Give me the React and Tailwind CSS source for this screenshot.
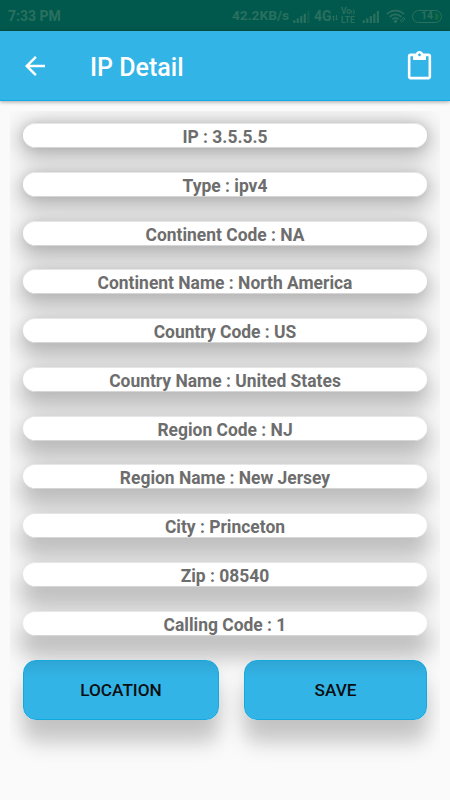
import React from 'react';

const details = [
  { label: 'IP', value: '3.5.5.5' },
  { label: 'Type', value: 'ipv4' },
  { label: 'Continent Code', value: 'NA' },
  { label: 'Continent Name', value: 'North America' },
  { label: 'Country Code', value: 'US' },
  { label: 'Country Name', value: 'United States' },
  { label: 'Region Code', value: 'NJ' },
  { label: 'Region Name', value: 'New Jersey' },
  { label: 'City', value: 'Princeton' },
  { label: 'Zip', value: '08540' },
  { label: 'Calling Code', value: '1' }
];

// Elevation shadow drops further the lower the element sits on the screen
const elevation = (index) => ({
  boxShadow: [
    `0 ${4 + index * 1.1}px 24px 7px rgba(0,0,0,0.16)`,
    `0 ${6 + index * 1.3}px 18px 1px rgba(0,0,0,${0.13 - index * 0.004})`,
    `0 0 10px rgba(0,0,0,${0.1 - index * 0.008})`
  ].join(', ')
});

const SignalIcon = ({ className, dimLast }) => (
  <svg viewBox="0 0 18 14" className={className} fill="currentColor">
    <rect x="0" y="11" width="2.4" height="3" />
    <rect x="3.8" y="9" width="2.4" height="5" />
    <rect x="7.6" y="6.5" width="2.4" height="7.5" />
    <rect x="11.4" y="4" width="2.4" height="10" />
    <rect x="15.2" y="1" width="2.4" height="13" opacity={dimLast ? 0.4 : 1} />
  </svg>
);

const StatusBar = () => (
  <div className="h-[31px] bg-[#01594d] border-b border-[#0b5140] text-[#29705f] flex items-center pt-[2px] pl-2 pr-[8px]">
    <span className="text-[14px] font-bold leading-none">7:33 PM</span>
    <div className="ml-auto flex items-center">
      <span className="text-[13.7px] font-bold leading-none">42.2KB/s</span>
      <SignalIcon className="w-[17px] h-[13px] ml-[4px]" dimLast />
      <span className="w-[17px] text-[14px] font-bold leading-none ml-[4px]">4G</span>
      <svg viewBox="0 0 6 6" className="w-[6px] h-[6px] ml-[1px] mt-1" fill="none" stroke="currentColor">
        <path d="M1.5 6V1M.3 2.2 1.5 1l1.2 1.2M4.5 0v5M3.3 3.8 4.5 5l1.2-1.2" />
      </svg>
      <div className="ml-[3px] w-[15px] flex flex-col text-[8.5px] font-bold leading-[9px]">
        <div className="flex items-center">
          <span>Vo</span>
          <svg viewBox="0 0 4 6" className="w-[4px] h-[6px]" fill="none" stroke="currentColor">
            <path d="M.5 1.500q1 1.500 0 3M2.500.5q2 2.500 0 5" />
          </svg>
        </div>
        <span>LTE</span>
      </div>
      <SignalIcon className="w-[18px] h-[13px] ml-[6px]" />
      <svg viewBox="0 0 20 14" className="w-[20px] h-[14px] ml-[6px]" fill="none" stroke="currentColor" strokeWidth="1.8">
        <path d="M1 5.2a12 12 0 0 1 17 0M3.7 7.8a8.2 8.2 0 0 1 11.6 0M6.3 10.3a4.5 4.5 0 0 1 6.4 0" />
        <circle cx="9.5" cy="12.3" r=".8" />
        <path d="m14.5 11.5 3-3 1.5 1.5-3.5 3z" strokeWidth="1" />
      </svg>
      <div className="ml-[6px] w-[30px] h-[13px] rounded-full border border-current flex items-center justify-end pr-[2px]">
        <span className="text-[10.5px] font-bold leading-none mr-[2px]">14</span>
        <span className="w-[4px] h-[7px] rounded-r-full bg-[#0c6b40]" />
      </div>
    </div>
  </div>
);

const AppBar = () => (
  <header className="relative z-10 h-[70px] bg-[#33b4e6] border-b border-[#10abe4] shadow-[0_1px_4px_rgba(0,0,0,0.35)] flex items-center pl-[25px] pr-[15px] text-white">
    <button className="block mt-[1px]">
      <svg viewBox="4 4 16 16" className="w-[20px] h-[20px]" fill="currentColor">
        <path d="M20 11H7.83l5.59-5.59L12 4l-8 8 8 8 1.41-1.41L7.83 13H20v-2z" />
      </svg>
    </button>
    <h1 className="ml-[45px] mt-[4px] text-[25px] font-medium leading-none">IP Detail</h1>
    <button className="ml-auto mt-[1px]">
      <svg viewBox="0 0 24 24" className="w-[31px] h-[31px]" fill="currentColor">
        <path d="M19 2h-4.18C14.4.84 13.3 0 12 0S9.6.84 9.18 2H5c-1.1 0-2 .9-2 2v16c0 1.1.9 2 2 2h14c1.1 0 2-.9 2-2V4c0-1.100-.9-2-2-2zm-7 0c.55 0 1 .45 1 1s-.45 1-1 1-1-.45-1-1 .45-1 1-1zm7 18H5V4h2v3h10V4h2v16z" />
      </svg>
    </button>
  </header>
);

const DetailRow = ({ label, value, index }) => (
  <div className="relative h-[25px]">
    <div className="absolute inset-0 -z-10 rounded-full" style={elevation(index)} />
    <div className="h-full rounded-full bg-white border-y border-t-[#e6e6e6] border-b-[#d6d6d6] text-center text-[17.45px] font-bold leading-[26px] text-[#6d6d6d]">
      {label} : {value}
    </div>
  </div>
);

const ActionButton = ({ children, className }) => (
  <div className={`relative h-[60px] ${className}`}>
    <div className="absolute inset-0 -z-10 rounded-[13px] shadow-[0_24px_20px_rgba(0,0,0,0.17),0_10px_22px_rgba(0,0,0,0.08)]" />
    <button className="w-full h-full pt-[2px] rounded-[13px] border border-[#12a9de] bg-linear-to-b from-[#2fa6d5] to-[#33b4e6] to-30% text-[17.2px] font-medium text-[#0a0f12]">
      {children}
    </button>
  </div>
);

const App = () => {
  return (
    <div className="w-full h-screen overflow-hidden bg-[#fafafa] font-['Roboto',sans-serif]">
      <StatusBar />
      <AppBar />

      <main className="isolate mx-[10px] mt-[10px] h-[660px] overflow-hidden px-[13px] pt-[12px]">
        <div className="flex flex-col gap-[23.77px]">
          {details.map((item, index) => (
            <DetailRow key={item.label} index={index} {...item} />
          ))}
        </div>

        <div className="mt-[24.3px] flex gap-[25px]">
          <ActionButton className="w-[196px]">LOCATION</ActionButton>
          <ActionButton className="flex-1">SAVE</ActionButton>
        </div>
      </main>
    </div>
  );
};

export default App;
